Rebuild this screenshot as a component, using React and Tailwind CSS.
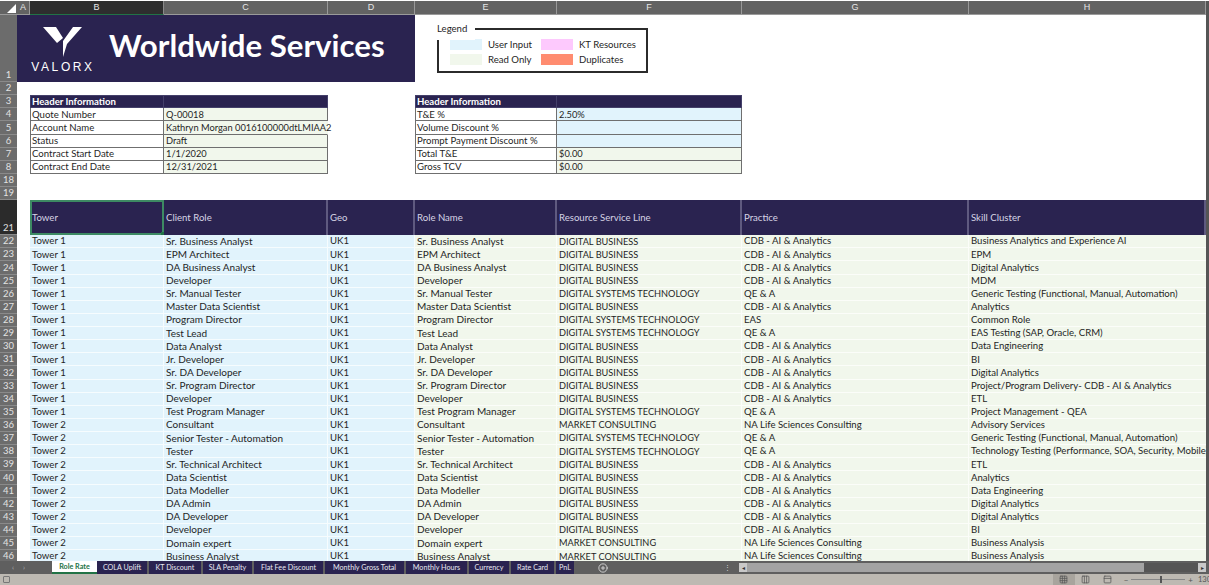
import React from 'react';
import { CirclePlus, Grid3x3, Columns3, PanelTop } from 'lucide-react';

const GRID = 'grid grid-cols-[17px_13px_134px_164px_87px_142px_185px_227px_237px_3px]';
const NAVY = 'bg-[#2a2350]';

const DB = 'DIGITAL BUSINESS';
const DST = 'DIGITAL SYSTEMS TECHNOLOGY';
const MC = 'MARKET CONSULTING';
const CDB = 'CDB - AI & Analytics';
const QE = 'QE & A';
const NA = 'NA Life Sciences Consulting';

const rows = [
  ['Tower 1', 'Sr. Business Analyst', DB, CDB, 'Business Analytics and Experience AI'],
  ['Tower 1', 'EPM Architect', DB, CDB, 'EPM'],
  ['Tower 1', 'DA Business Analyst', DB, CDB, 'Digital Analytics'],
  ['Tower 1', 'Developer', DB, CDB, 'MDM'],
  ['Tower 1', 'Sr. Manual Tester', DST, QE, 'Generic Testing (Functional, Manual, Automation)'],
  ['Tower 1', 'Master Data Scientist', DB, CDB, 'Analytics'],
  ['Tower 1', 'Program Director', DST, 'EAS', 'Common Role'],
  ['Tower 1', 'Test Lead', DST, QE, 'EAS Testing (SAP, Oracle, CRM)'],
  ['Tower 1', 'Data Analyst', DB, CDB, 'Data Engineering'],
  ['Tower 1', 'Jr. Developer', DB, CDB, 'BI'],
  ['Tower 1', 'Sr. DA Developer', DB, CDB, 'Digital Analytics'],
  ['Tower 1', 'Sr. Program Director', DB, CDB, 'Project/Program Delivery- CDB - AI & Analytics'],
  ['Tower 1', 'Developer', DB, CDB, 'ETL'],
  ['Tower 1', 'Test Program Manager', DST, QE, 'Project Management - QEA'],
  ['Tower 2', 'Consultant', MC, NA, 'Advisory Services'],
  ['Tower 2', 'Senior Tester - Automation', DST, QE, 'Generic Testing (Functional, Manual, Automation)'],
  ['Tower 2', 'Tester', DST, QE, 'Technology Testing (Performance, SOA, Security, Mobile)'],
  ['Tower 2', 'Sr. Technical Architect', DB, CDB, 'ETL'],
  ['Tower 2', 'Data Scientist', DB, CDB, 'Analytics'],
  ['Tower 2', 'Data Modeller', DB, CDB, 'Data Engineering'],
  ['Tower 2', 'DA Admin', DB, CDB, 'Digital Analytics'],
  ['Tower 2', 'DA Developer', DB, CDB, 'Digital Analytics'],
  ['Tower 2', 'Developer', DB, CDB, 'BI'],
  ['Tower 2', 'Domain expert', MC, NA, 'Business Analysis'],
  ['Tower 2', 'Business Analyst', MC, NA, 'Business Analysis'],
];

const tabs = [
  ['COLA Uplift', 'w-[50px]'],
  ['KT Discount', 'w-[52px]'],
  ['SLA Penalty', 'w-[49px]'],
  ['Flat Fee Discount', 'w-[69px]'],
  ['Monthly Gross Total', 'w-[79px]'],
  ['Monthly Hours', 'w-[61px]'],
  ['Currency', 'w-[40px]'],
  ['Rate Card', 'w-[43px]'],
  ['PnL', 'w-[18px]'],
];

const RowHead = ({ n, dark }) => (
  <div className={`flex items-end justify-center border-b border-[#8a8a8a] text-[9.5px] leading-[12px] text-[#e2e2e2] ${dark ? 'bg-[#2b2b2b]' : 'bg-[#6c6c6c]'}`}>
    {n}
  </div>
);

const ColHead = ({ label, selected }) => (
  <div className={`flex items-center justify-center border-r border-b text-[9px] text-[#e6e6e6] ${selected ? 'bg-[#2e2e2e] border-r-[#8a8a8a] border-b-[#217346]' : 'bg-[#636363] border-[#9a9a9a]'}`}>
    {label}
  </div>
);

// one label + value pair of the header information blocks
const InfoRow = ({ label, value, tint, clearRight }) => (
  <>
    <div className="flex items-center whitespace-nowrap border-x border-b border-[#6f6f6f] bg-white pl-px">{label}</div>
    <div className={`flex items-center whitespace-nowrap border-b border-r border-[#6f6f6f] pl-0.5 text-[9.3px] ${tint} ${clearRight ? 'border-r-transparent' : ''}`}>{value}</div>
  </>
);

const InfoHead = () => (
  <>
    <div className={`flex items-center border border-[#44406a] pl-px font-bold text-white ${NAVY}`}>Header Information</div>
    <div className={`border-y border-r border-[#44406a] ${NAVY}`} />
  </>
);

const BLUE = 'bg-[#e1f3fc]';
const GREEN = 'bg-[#f1f7ec]';

const infoRows = [
  [3, null, null],
  [4, ['Quote Number', 'Q-00018', GREEN], ['T&E %', '2.50%', BLUE]],
  [5, ['Account Name', 'Kathryn Morgan 0016100000dtLMIAA2', GREEN, true], ['Volume Discount %', '', BLUE]],
  [6, ['Status', 'Draft', GREEN], ['Prompt Payment Discount %', '', BLUE]],
  [7, ['Contract Start Date', '1/1/2020', GREEN], ['Total T&E', '$0.00', GREEN]],
  [8, ['Contract End Date', '12/31/2021', GREEN], ['Gross TCV', '$0.00', GREEN]],
];

const LegendItem = ({ color, label }) => (
  <div className="flex items-center gap-[6px]">
    <div className={`h-[11px] w-[32px] ${color}`} />
    <span>{label}</span>
  </div>
);

const HeaderCell = ({ children, selected }) => (
  <div className={`relative flex items-center whitespace-nowrap text-[#d6d4e4] ${NAVY} ${selected ? 'border-2 border-[#3d8a63]' : 'border-r-2 border-[#5f5a80] pl-0.5'}`}>
    {children}
    {selected && <div className="absolute -bottom-[2px] -right-[2px] h-[3px] w-[3px] bg-[#217346]" />}
  </div>
);

const App = () => {
  return (
    <div className="flex h-[585px] w-[1209px] flex-col overflow-hidden bg-white text-[9.6px] leading-none text-[#1f1f1f] [font-family:Lato,'Liberation_Sans',sans-serif]">
      <div className="min-h-0 flex-1 overflow-hidden pt-px">
        {/* column letters */}
        <div className={`${GRID} h-[14px] font-['Liberation_Sans']`}>
          <div className="flex items-end justify-end border-b border-[#9a9a9a] bg-[#636363] pb-px pr-px">
            <div className="h-0 w-0 border-b-[9px] border-l-[9px] border-b-white border-l-transparent" />
          </div>
          <ColHead label="A" />
          <ColHead label="B" selected />
          <ColHead label="C" />
          <ColHead label="D" />
          <ColHead label="E" />
          <ColHead label="F" />
          <ColHead label="G" />
          <ColHead label="H" />
          <div className="bg-[#555555]" />
        </div>

        {/* banner row */}
        <div className={`${GRID} h-[67px]`}>
          <RowHead n={1} />
          <div className={`col-span-4 flex items-center gap-3 pl-3 ${NAVY}`}>
            <div className="flex w-[68px] flex-col items-center gap-[3px] pt-0.5">
              <svg width="42" height="31" viewBox="0 0 42 31" fill="white">
                <polygon points="1,0 14,0 21,11 15,16" />
                <polygon points="31,0 40,0 25,17 21,30 21,14" />
              </svg>
              <span className="whitespace-nowrap font-['Liberation_Sans'] text-[12px] tracking-[2.6px] text-white">VALORX</span>
            </div>
            <span className="-mt-[6px] whitespace-nowrap text-[31.2px] font-bold text-white">Worldwide Services</span>
          </div>
          <div className="col-span-3 flex items-start pl-[22px] pt-[13px]">
            <div className="relative grid h-[45px] w-[211px] grid-cols-[91px_1fr] content-start gap-y-[4px] border-2 border-[#2b2b2b] pl-[11px] pt-[9px]">
              <span className="absolute -left-[2px] -top-[6px] h-[16px] bg-white pr-2 leading-[10px]">Legend</span>
              <LegendItem color={BLUE} label="User Input" />
              <LegendItem color="bg-[#fdc9fd]" label="KT Resources" />
              <LegendItem color={GREEN} label="Read Only" />
              <LegendItem color="bg-[#ff8c70]" label="Duplicates" />
            </div>
          </div>
          <div />
          <div className="bg-[#555555]" />
        </div>

        <div className={`${GRID} h-[13.13px]`}>
          <RowHead n={2} />
          <div className="col-span-8" />
          <div className="bg-[#555555]" />
        </div>

        {/* header information blocks */}
        {infoRows.map(([n, left, right]) => (
          <div key={n} className={`${GRID} h-[13.13px]`}>
            <RowHead n={n} />
            <div />
            {left ? <InfoRow label={left[0]} value={left[1]} tint={left[2]} clearRight={left[3]} /> : <InfoHead />}
            <div />
            {right ? <InfoRow label={right[0]} value={right[1]} tint={right[2]} /> : <InfoHead />}
            <div />
            <div />
            <div className="bg-[#555555]" />
          </div>
        ))}

        {[18, 19].map((n) => (
          <div key={n} className={`${GRID} h-[13.13px]`}>
            <RowHead n={n} />
            <div className="col-span-8" />
            <div className="bg-[#555555]" />
          </div>
        ))}

        {/* table header */}
        <div className={`${GRID} h-[35px]`}>
          <RowHead n={21} dark />
          <div />
          <HeaderCell selected>Tower</HeaderCell>
          <HeaderCell>Client Role</HeaderCell>
          <HeaderCell>Geo</HeaderCell>
          <HeaderCell>Role Name</HeaderCell>
          <HeaderCell>Resource Service Line</HeaderCell>
          <HeaderCell>Practice</HeaderCell>
          <HeaderCell>Skill Cluster</HeaderCell>
          <div className="bg-[#555555]" />
        </div>

        {/* table rows */}
        {rows.map((r, i) => (
          <div key={i} className={`${GRID} h-[13.13px]`}>
            <RowHead n={22 + i} />
            <div />
            <div className={`flex items-center border-b border-r border-white/70 px-0.5 ${BLUE}`}>{r[0]}</div>
            <div className={`flex items-center border-b border-r border-white/70 pb-px pl-0.5 text-[10px] ${BLUE}`}>{r[1]}</div>
            <div className={`flex items-center border-b border-r border-white/70 px-0.5 ${BLUE}`}>UK1</div>
            <div className={`flex items-center border-b border-r border-white/70 pb-px pl-0.5 text-[10px] ${GREEN}`}>{r[1]}</div>
            <div className={`flex items-center border-b border-r border-white/70 px-0.5 text-[9.2px] ${GREEN}`}>{r[2]}</div>
            <div className={`flex items-center border-b border-r border-white/70 px-0.5 ${GREEN}`}>{r[3]}</div>
            <div className={`flex items-center overflow-hidden whitespace-nowrap border-b border-white/70 px-0.5 ${GREEN}`}>{r[4]}</div>
            <div className="bg-[#555555]" />
          </div>
        ))}
      </div>

      {/* sheet tabs */}
      <div className="flex h-[13px] items-stretch bg-[#5f5f5f] text-[7.2px] text-[#e8e8f0]">
        <div className="flex w-[52px] items-center gap-[9px] pl-[12px] text-[#b5b5b5]">
          <span>‹</span>
          <span>›</span>
        </div>
        <div className="flex w-[45px] items-center justify-center border-b-2 border-[#217346] bg-white font-bold text-[#217346]">Role Rate</div>
        <div className="flex gap-[2px]">
          {tabs.map(([t, w]) => (
            <div key={t} className={`flex items-center justify-center whitespace-nowrap ${NAVY} ${w}`}>{t}</div>
          ))}
        </div>
        <div className="flex w-[34px] items-center justify-end text-[#e0e0e0]">
          <CirclePlus size={10} />
        </div>
        <div className="flex w-[131px] items-center justify-end pr-[8px] text-[#d5d5d5]">⋮</div>
        <div className="flex h-[9px] flex-1 items-stretch self-center bg-[#555555]">
          <div className="flex w-[8px] items-center justify-center bg-[#c8c8c8] text-[6px] text-[#333]">◂</div>
          <div className="w-[397px] bg-[#a3a3a3]" />
          <div className="flex-1" />
          <div className="flex w-[8px] items-center justify-center bg-[#c8c8c8] text-[6px] text-[#333]">▸</div>
        </div>
        <div className="w-[3px]" />
      </div>

      {/* status bar */}
      <div className="flex h-[11px] items-center bg-[#bdb9b2] text-[#555]">
        <div className="ml-[3px] h-[7px] w-[7px] rounded-[1px] border border-[#777]" />
        <div className="ml-auto flex h-full w-[22px] items-center justify-center bg-[#a8a49d]">
          <Grid3x3 size={9} />
        </div>
        <div className="flex w-[22px] justify-center"><Columns3 size={9} /></div>
        <div className="flex w-[22px] justify-center"><PanelTop size={9} /></div>
        <span className="ml-[5px] text-[8px]">−</span>
        <div className="relative mx-[3px] h-px w-[54px] bg-[#888]">
          <div className="absolute -top-[3px] left-[29px] h-[7px] w-[2px] bg-[#555]" />
        </div>
        <span className="text-[8px]">+</span>
        <span className="ml-[5px] w-[11px] overflow-hidden whitespace-nowrap text-[7.5px]">130%</span>
      </div>
    </div>
  );
};

export default App;
